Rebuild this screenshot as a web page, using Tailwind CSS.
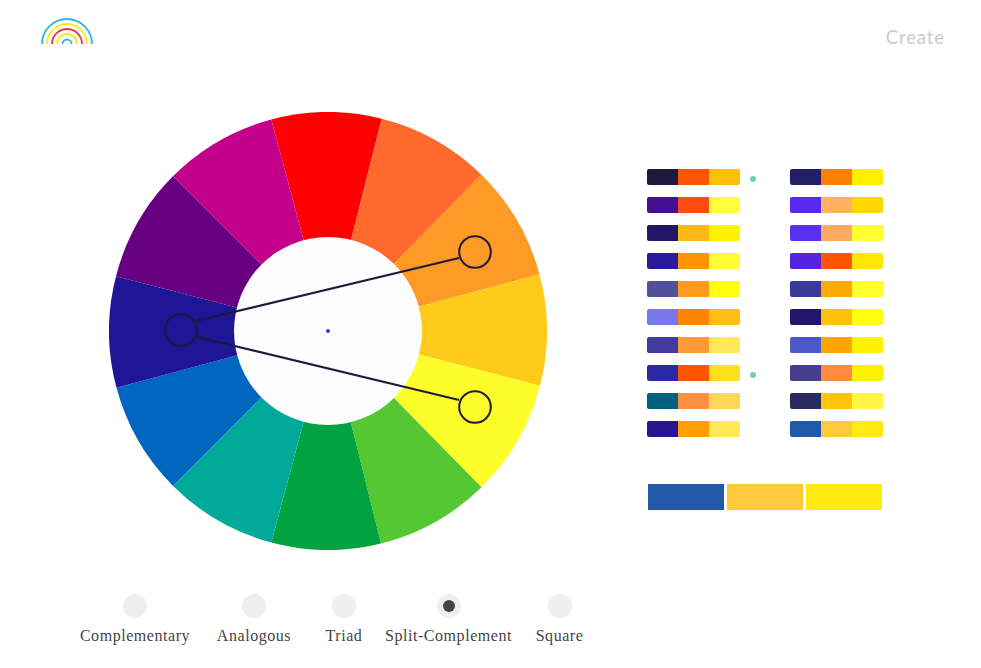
<!DOCTYPE html>
<html lang="en">
<head>
    <meta charset="UTF-8">
    <meta name="viewport" content="width=device-width, initial-scale=1.0">
    <title>Color Wheel</title>
    <script src="https://cdn.jsdelivr.net/npm/@tailwindcss/browser@4"></script>
</head>
<body class="bg-white">

    <!-- Header -->
    <header class="flex justify-between h-[45px] pt-[18px] pl-[41px] pr-[36px]">
        <svg width="52" height="26" viewBox="0 0 52 26" fill="none" stroke-width="1.8">
            <path d="M1 26a25 25 0 0 1 50 0" stroke="#2fb5d8"/>
            <path d="M6 26a20 20 0 0 1 40 0" stroke="#fdea1c"/>
            <path d="M11 26a15 15 0 0 1 30 0" stroke="#e8383c"/>
            <path d="M16 26a10 10 0 0 1 20 0" stroke="#fdea1c"/>
            <path d="M21.5 26a4.5 4.5 0 0 1 9 0" stroke="#2fb5d8"/>
        </svg>
        <a href="#" class="font-['Lato',sans-serif] text-[18.5px] leading-[38px] tracking-[0.9px] text-[#cdc9cc]">Create</a>
    </header>

    <main class="flex">
        <!-- Wheel and harmony modes -->
        <section class="w-[647px] shrink-0">
            <svg class="block ml-[109px] mt-[67px]" width="438" height="438" viewBox="-219 -219 438 438">
                <g>
                    <path fill="#fe0000" d="M0 0L-56.7 -211.5A219 219 0 0 1 53.7 -212.3Z"/>
                    <path fill="#ff6a2c" d="M0 0L53.7 -212.3A219 219 0 0 1 153.5 -156.2Z"/>
                    <path fill="#ff9a27" d="M0 0L153.5 -156.2A219 219 0 0 1 211.5 -56.7Z"/>
                    <path fill="#ffcb1b" d="M0 0L211.5 -56.7A219 219 0 0 1 212 54.8Z"/>
                    <path fill="#fdfd2a" d="M0 0L212 54.8A219 219 0 0 1 153.5 156.2Z"/>
                    <path fill="#54c733" d="M0 0L153.5 156.2A219 219 0 0 1 53 212.5Z"/>
                    <path fill="#00a33d" d="M0 0L53 212.5A219 219 0 0 1 -56.7 211.5Z"/>
                    <path fill="#00a99a" d="M0 0L-56.7 211.5A219 219 0 0 1 -154.9 154.9Z"/>
                    <path fill="#0066c0" d="M0 0L-154.9 154.9A219 219 0 0 1 -211.5 56.7Z"/>
                    <path fill="#1e1696" d="M0 0L-211.5 56.7A219 219 0 0 1 -212 -54.8Z"/>
                    <path fill="#660080" d="M0 0L-212 -54.8A219 219 0 0 1 -154.9 -154.9Z"/>
                    <path fill="#c4008a" d="M0 0L-154.9 -154.9A219 219 0 0 1 -56.7 -211.5Z"/>
                </g>
                <circle r="94" fill="#fdfdfd"/>
                <circle r="2" fill="#5a28f0"/>
                <!-- Split-complement handles -->
                <g fill="none" stroke="#1e1a3c" stroke-width="2">
                    <path stroke-width="2.2" d="M-132 -10L131 -73"/>
                    <path stroke-width="2.2" d="M-131 6L131 69"/>
                    <circle cx="-147" cy="-1" r="15.8"/>
                    <circle cx="147" cy="-79" r="15.8"/>
                    <circle cx="147" cy="76" r="15.8"/>
                </g>
            </svg>

            <div class="flex mt-[44px] ml-[80px] font-['Liberation_Serif',serif] text-[16px] leading-[20px] tracking-[0.55px] text-[#444444]">
                <div class="w-[110px] mr-[28px] flex flex-col items-center gap-[8px] whitespace-nowrap">
                    <span class="w-6 h-6 rounded-full bg-[#f0efed]"></span>
                    Complementary
                </div>
                <div class="w-[72px] mr-[35px] flex flex-col items-center gap-[8px] whitespace-nowrap">
                    <span class="w-6 h-6 rounded-full bg-[#f0efed]"></span>
                    Analogous
                </div>
                <div class="w-[38px] mr-[21px] flex flex-col items-center gap-[8px] whitespace-nowrap">
                    <span class="w-6 h-6 rounded-full bg-[#f0efed]"></span>
                    Triad
                </div>
                <div class="w-[129px] mr-[23px] flex flex-col items-center gap-[8px] whitespace-nowrap">
                    <span class="w-6 h-6 rounded-full bg-[#f0efed] flex items-center justify-center">
                        <span class="w-3 h-3 rounded-full bg-[#444444]"></span>
                    </span>
                    Split-Complement
                </div>
                <div class="w-[47px] flex flex-col items-center gap-[8px] whitespace-nowrap">
                    <span class="w-6 h-6 rounded-full bg-[#f0efed]"></span>
                    Square
                </div>
            </div>
        </section>

        <!-- Palettes -->
        <section class="pt-[124px]">
            <div class="grid grid-cols-[93px_93px] gap-x-[50px] gap-y-[12px]">
                <div class="relative flex h-4">
                    <span class="w-[31px] rounded-l-[2px] bg-[#1e1a3c]"></span><span class="w-[31px] bg-[#ff5500]"></span><span class="w-[31px] rounded-r-[2px] bg-[#ffc107]"></span>
                    <span class="absolute left-[103px] top-[7px] w-[6px] h-[6px] rounded-full bg-[#72d1a8]"></span>
                </div>
                <div class="flex h-4"><span class="w-[31px] rounded-l-[2px] bg-[#231f66]"></span><span class="w-[31px] bg-[#ff8000]"></span><span class="w-[31px] rounded-r-[2px] bg-[#fff000]"></span></div>

                <div class="flex h-4"><span class="w-[31px] rounded-l-[2px] bg-[#45108f]"></span><span class="w-[31px] bg-[#ff4a12]"></span><span class="w-[31px] rounded-r-[2px] bg-[#fdfd3a]"></span></div>
                <div class="flex h-4"><span class="w-[31px] rounded-l-[2px] bg-[#5a28f0]"></span><span class="w-[31px] bg-[#ffb060]"></span><span class="w-[31px] rounded-r-[2px] bg-[#ffd800]"></span></div>

                <div class="flex h-4"><span class="w-[31px] rounded-l-[2px] bg-[#221668]"></span><span class="w-[31px] bg-[#ffb917]"></span><span class="w-[31px] rounded-r-[2px] bg-[#fff200]"></span></div>
                <div class="flex h-4"><span class="w-[31px] rounded-l-[2px] bg-[#5a30f0]"></span><span class="w-[31px] bg-[#ffaa60]"></span><span class="w-[31px] rounded-r-[2px] bg-[#ffff33]"></span></div>

                <div class="flex h-4"><span class="w-[31px] rounded-l-[2px] bg-[#2a1a99]"></span><span class="w-[31px] bg-[#ff9500]"></span><span class="w-[31px] rounded-r-[2px] bg-[#fdfd33]"></span></div>
                <div class="flex h-4"><span class="w-[31px] rounded-l-[2px] bg-[#5522e0]"></span><span class="w-[31px] bg-[#ff5500]"></span><span class="w-[31px] rounded-r-[2px] bg-[#ffe800]"></span></div>

                <div class="flex h-4"><span class="w-[31px] rounded-l-[2px] bg-[#51519a]"></span><span class="w-[31px] bg-[#ff9a20]"></span><span class="w-[31px] rounded-r-[2px] bg-[#ffff10]"></span></div>
                <div class="flex h-4"><span class="w-[31px] rounded-l-[2px] bg-[#3a3a96]"></span><span class="w-[31px] bg-[#ffa800]"></span><span class="w-[31px] rounded-r-[2px] bg-[#ffff2a]"></span></div>

                <div class="flex h-4"><span class="w-[31px] rounded-l-[2px] bg-[#7878e8]"></span><span class="w-[31px] bg-[#ff8500]"></span><span class="w-[31px] rounded-r-[2px] bg-[#ffbf10]"></span></div>
                <div class="flex h-4"><span class="w-[31px] rounded-l-[2px] bg-[#24146a]"></span><span class="w-[31px] bg-[#ffc107]"></span><span class="w-[31px] rounded-r-[2px] bg-[#ffff10]"></span></div>

                <div class="flex h-4"><span class="w-[31px] rounded-l-[2px] bg-[#413c9c]"></span><span class="w-[31px] bg-[#ff9a3a]"></span><span class="w-[31px] rounded-r-[2px] bg-[#ffe95a]"></span></div>
                <div class="flex h-4"><span class="w-[31px] rounded-l-[2px] bg-[#4a58c8]"></span><span class="w-[31px] bg-[#ffa500]"></span><span class="w-[31px] rounded-r-[2px] bg-[#fff200]"></span></div>

                <div class="relative flex h-4">
                    <span class="w-[31px] rounded-l-[2px] bg-[#2a2aa0]"></span><span class="w-[31px] bg-[#ff5500]"></span><span class="w-[31px] rounded-r-[2px] bg-[#ffe01a]"></span>
                    <span class="absolute left-[103px] top-[7px] w-[6px] h-[6px] rounded-full bg-[#72d1a8]"></span>
                </div>
                <div class="flex h-4"><span class="w-[31px] rounded-l-[2px] bg-[#443c8c]"></span><span class="w-[31px] bg-[#ff8a40]"></span><span class="w-[31px] rounded-r-[2px] bg-[#fff000]"></span></div>

                <div class="flex h-4"><span class="w-[31px] rounded-l-[2px] bg-[#006080]"></span><span class="w-[31px] bg-[#ff9040]"></span><span class="w-[31px] rounded-r-[2px] bg-[#ffd55a]"></span></div>
                <div class="flex h-4"><span class="w-[31px] rounded-l-[2px] bg-[#2a2a60]"></span><span class="w-[31px] bg-[#ffc508]"></span><span class="w-[31px] rounded-r-[2px] bg-[#fff545]"></span></div>

                <div class="flex h-4"><span class="w-[31px] rounded-l-[2px] bg-[#2a1590]"></span><span class="w-[31px] bg-[#ffa000]"></span><span class="w-[31px] rounded-r-[2px] bg-[#ffea55]"></span></div>
                <div class="flex h-4"><span class="w-[31px] rounded-l-[2px] bg-[#2259a6]"></span><span class="w-[31px] bg-[#ffc93c]"></span><span class="w-[31px] rounded-r-[2px] bg-[#ffeb12]"></span></div>
            </div>

            <!-- Selected palette -->
            <div class="flex gap-[3px] mt-[47px] ml-[1px] h-[26px]">
                <div class="w-[76px] bg-[#2258a5]"></div>
                <div class="w-[76px] bg-[#ffc93c]"></div>
                <div class="w-[76px] bg-[#ffe90f]"></div>
            </div>
        </section>
    </main>

</body>
</html>
